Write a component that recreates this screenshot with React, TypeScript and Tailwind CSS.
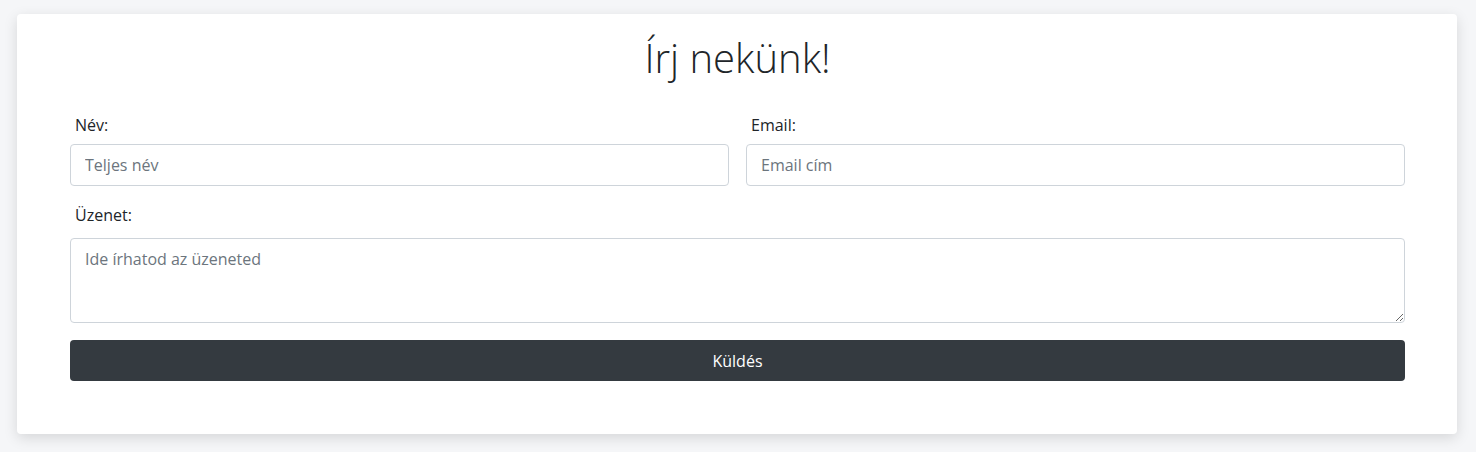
export default function App() {
  return (
    <div
      className="min-h-screen bg-[#f5f6f8] pl-[17px] pr-[19px] pt-[14px] pb-[18px]"
      style={{ fontFamily: '"Open Sans", "Noto Sans", sans-serif' }}
    >
      <div className="bg-white rounded-[4px] shadow-[0_4px_14px_rgba(0,0,0,0.13)] pl-[53px] pr-[52px] pt-[20px] pb-[53px]">
        <h1 className="text-center text-[40px] leading-[1.2] font-light text-[#212529] mb-[31px]">
          Írj nekünk!
        </h1>

        <form className="flex flex-col">
          <div className="grid grid-cols-2 gap-x-[17px]">
            <div className="flex flex-col">
              <label className="text-[16px] leading-[24px] text-[#212529] pl-[5px] mb-[7px]">
                Név:
              </label>
              <input
                type="text"
                placeholder="Teljes név"
                className="h-[42px] border border-[#ced4da] rounded-[4px] px-[14px] text-[16px] text-[#212529] placeholder:text-[#6c757d] outline-none"
              />
            </div>
            <div className="flex flex-col">
              <label className="text-[16px] leading-[24px] text-[#212529] pl-[5px] mb-[7px]">
                Email:
              </label>
              <input
                type="email"
                placeholder="Email cím"
                className="h-[42px] border border-[#ced4da] rounded-[4px] px-[14px] text-[16px] text-[#212529] placeholder:text-[#6c757d] outline-none"
              />
            </div>
          </div>

          <div className="flex flex-col mt-[17px]">
            <label className="text-[16px] leading-[24px] text-[#212529] pl-[5px] mb-[11px]">
              Üzenet:
            </label>
            <textarea
              placeholder="Ide írhatod az üzeneted"
              className="h-[85px] border border-[#ced4da] rounded-[4px] px-[14px] py-[8px] text-[16px] leading-[24px] text-[#212529] placeholder:text-[#6c757d] outline-none"
            />
          </div>

          <button
            type="button"
            className="mt-[17px] h-[41px] bg-[#343a40] text-white text-[16px] rounded-[4px]"
          >
            Küldés
          </button>
        </form>
      </div>
    </div>
  );
}
